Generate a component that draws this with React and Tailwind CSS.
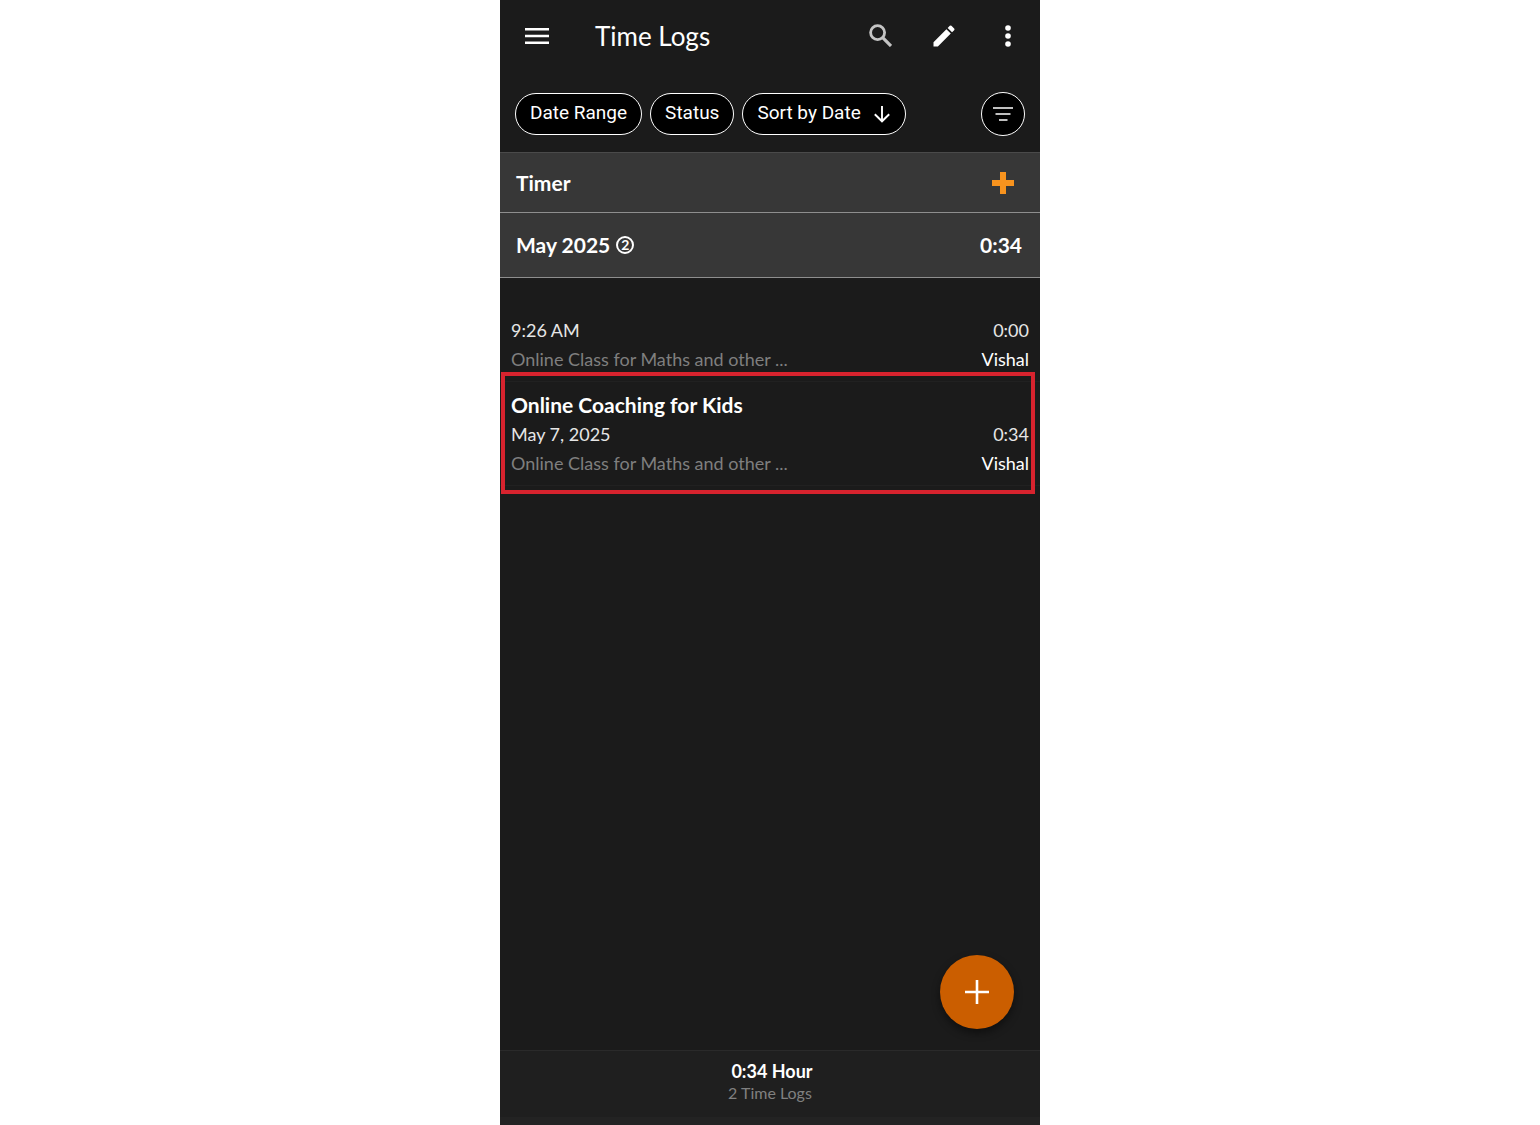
const logs = [
  { id: 1, title: '', date: '9:26 AM', time: '0:00', note: 'Online Class for Maths and other ...', user: 'Vishal', marked: false },
  { id: 2, title: 'Online Coaching for Kids', date: 'May 7, 2025', time: '0:34', note: 'Online Class for Maths and other ...', user: 'Vishal', marked: true },
];

function Header() {
  return (
    <header className="flex h-[71px] items-center pl-[21px] pr-4">
      <button aria-label="Menu" className="flex size-8 items-center justify-center">
        <svg viewBox="0 0 24 16" className="h-4 w-6" fill="#fff" aria-hidden="true">
          <path d="M0 0h24v2.6H0zM0 6.7h24v2.6H0zM0 13.4h24V16H0z" />
        </svg>
      </button>
      <h1 className="ml-[42px] flex-1 text-[26px] leading-8">Time Logs</h1>
      <div className="flex items-center gap-8">
        <button aria-label="Search" className="flex size-8 items-center justify-center">
          <svg viewBox="0 0 23 23" className="size-[23px]" fill="none" stroke="#c4c4c4" strokeWidth="2.8" aria-hidden="true">
            <circle cx="8.600" cy="8.600" r="7" />
            <path d="M13.700 13.700 22 22" strokeWidth="3.200" />
          </svg>
        </button>
        <button aria-label="Edit" className="flex size-8 items-center justify-center">
          <svg viewBox="0 0 24 24" className="size-7" fill="#fff" aria-hidden="true">
            <path d="M3 17.25V21h3.75L17.81 9.94l-3.75-3.75L3 17.25zM20.71 7.04a1 1 0 0 0 0-1.41l-2.34-2.34a1 1 0 0 0-1.41 0l-1.83 1.83 3.75 3.75 1.83-1.83z" />
          </svg>
        </button>
        <button aria-label="More options" className="flex size-8 items-center justify-center">
          <svg viewBox="0 0 6 22" className="h-[22px] w-1.5" fill="#fff" aria-hidden="true">
            <circle cx="3" cy="3" r="2.8" />
            <circle cx="3" cy="11" r="2.8" />
            <circle cx="3" cy="19" r="2.8" />
          </svg>
        </button>
      </div>
    </header>
  );
}

function Pill({ children }) {
  return (
    <button className="flex h-[42px] items-center gap-3 whitespace-nowrap rounded-full border border-white bg-black px-[14px] font-[Roboto,sans-serif] text-[19px]">
      {children}
    </button>
  );
}

function Filters() {
  return (
    <div className="flex h-[81px] items-center gap-2 px-[15px] pt-1">
      <Pill>Date Range</Pill>
      <Pill>Status</Pill>
      <Pill>
        Sort by Date
        <svg viewBox="0 0 18 18" className="size-[18px]" fill="none" stroke="#fff" strokeWidth="1.9" aria-hidden="true">
          <path d="M9 1v15.2M1.8 9.2 9 16.3l7.2-7.1" />
        </svg>
      </Pill>
      <button aria-label="Filter" className="ml-auto flex size-11 items-center justify-center rounded-full border border-white bg-black">
        <svg viewBox="0 0 20 14" className="h-3.5 w-5" fill="none" stroke="#fff" strokeWidth="1.6" aria-hidden="true">
          <path d="M0 1h20M2.5 7h15M6 13h8.500" />
        </svg>
      </button>
    </div>
  );
}

function LogItem({ log }) {
  return (
    <li className="relative border-b border-[#212121] px-[11px] pb-[7px] pt-2 text-[18px] leading-[29px]">
      <h3 className="h-[30px] text-[21px] font-bold leading-[30px]">{log.title}</h3>
      <div className="flex justify-between text-[#e6e6e6]">
        <span>{log.date}</span>
        <span>{log.time}</span>
      </div>
      <div className="flex justify-between">
        <span className="text-[#7f7f7f]">{log.note}</span>
        <span>{log.user}</span>
      </div>
      {log.marked && (
        <div className="pointer-events-none absolute -bottom-[9px] -top-2.5 left-px right-[5px] border-4 border-[#d8232e]" />
      )}
    </li>
  );
}

export default function App() {
  return (
    <div className="min-h-screen bg-white font-[Lato,sans-serif]">
      <div className="mx-auto flex min-h-screen max-w-[540px] flex-col bg-[#1b1b1b] text-white">
        <Header />
        <Filters />
        <section className="flex h-[61px] items-center justify-between border-b border-t border-b-[#8e8e8e] border-t-[#4a4a4a] bg-[#373737] pl-4 pr-[26px]">
          <h2 className="text-[21px] font-bold">Timer</h2>
          <button aria-label="Add timer">
            <svg viewBox="0 0 22 22" className="size-[22px]" fill="#f7931e" aria-hidden="true">
              <path d="M8 0h6v8h8v6h-8v8H8v-8H0V8h8z" />
            </svg>
          </button>
        </section>
        <section className="flex h-[65px] items-center justify-between border-b border-[#8e8e8e] bg-[#373737] pl-4 pr-[18px] text-[21px] font-bold">
          <h2 className="flex items-center gap-1.5">
            May 2025
            <span className="flex size-[18px] items-center justify-center rounded-full border-2 border-white text-[14px] leading-none">2</span>
          </h2>
          <span>0:34</span>
        </section>
        <main className="flex-1">
          <ul>
            {logs.map((log) => (
              <LogItem key={log.id} log={log} />
            ))}
          </ul>
        </main>
        <footer className="relative flex h-[75px] flex-col items-center border-b-8 border-t border-b-[#232323] border-t-[#2a2a2a] bg-[#1f1f1f] pt-2">
          <button aria-label="Add time log" className="absolute bottom-full right-[26px] mb-[22px] flex size-[74px] items-center justify-center rounded-full bg-[#cb5e00] shadow-[0_4px_8px_rgba(0,0,0,0.45)]">
            <svg viewBox="0 0 24 24" className="size-6" fill="none" stroke="#fff" strokeWidth="2.6" aria-hidden="true">
              <path d="M12 0v24M0 12h24" />
            </svg>
          </button>
          <p className="pl-1 text-[18px] font-bold leading-6">0:34 Hour</p>
          <p className="text-[16px] leading-5 text-[#808080]">2 Time Logs</p>
        </footer>
      </div>
    </div>
  );
}
